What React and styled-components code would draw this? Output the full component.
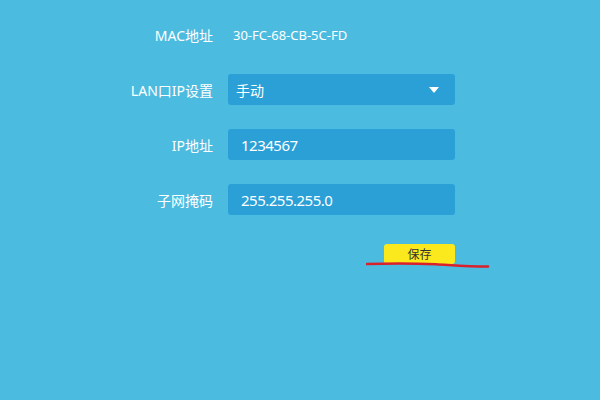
import React from "react";
import styled, { createGlobalStyle } from "styled-components";

const GlobalStyle = createGlobalStyle`
  html, body {
    margin: 0;
    padding: 0;
    background: #4bbce0;
  }

  body {
    font-family: "Noto Sans", "Noto Sans CJK SC", sans-serif;
  }
`;

const fields = [
  { label: "IP地址", value: "1234567" },
  { label: "子网掩码", value: "255.255.255.0" },
];

const App = () => {
  return (
    <Page>
      <GlobalStyle />
      <Form>
        <Label>MAC地址</Label>
        <StaticValue>30-FC-68-CB-5C-FD</StaticValue>

        <Label>LAN口IP设置</Label>
        <Select>
          <span>手动</span>
          <Caret />
        </Select>

        {fields.map((field) => (
          <React.Fragment key={field.label}>
            <Label>{field.label}</Label>
            <Input>{field.value}</Input>
          </React.Fragment>
        ))}

        <ButtonRow>
          <SaveButton>保存</SaveButton>
          <Scribble viewBox="0 0 125 7" width="125" height="7">
            <path
              d="M1 2 C 20 1.5, 50 1.5, 70 2.2 C 85 3, 100 4.5, 122 4.5"
              stroke="#d9212c"
              strokeWidth="2.6"
              fill="none"
              strokeLinecap="round"
            />
          </Scribble>
        </ButtonRow>
      </Form>
    </Page>
  );
};

const Page = styled.div`
  width: 600px;
  height: 400px;
  box-sizing: border-box;
  padding-top: 19px;
  background: #4bbce0;
  color: #ffffff;
`;

const Form = styled.div`
  display: grid;
  grid-template-columns: 213px 227px;
  grid-auto-rows: 31px;
  column-gap: 15px;
  row-gap: 24px;
`;

const Label = styled.div`
  display: flex;
  align-items: center;
  justify-content: flex-end;
  font-size: 14px;
  color: #ffffff;
`;

const StaticValue = styled.div`
  display: flex;
  align-items: center;
  padding-left: 5px;
  font-size: 13px;
  color: #ffffff;
`;

const Field = styled.div`
  display: flex;
  align-items: center;
  background: #2aa0d7;
  border-radius: 3px;
  color: #ffffff;
`;

const Select = styled(Field)`
  justify-content: space-between;
  padding: 0 16px 0 8px;
  font-size: 14px;
`;

const Caret = styled.span`
  width: 0;
  height: 0;
  border-left: 5px solid transparent;
  border-right: 5px solid transparent;
  border-top: 6px solid #ffffff;
`;

const Input = styled(Field)`
  padding-left: 13px;
  font-size: 15px;
  letter-spacing: -0.5px;
`;

const ButtonRow = styled.div`
  grid-column: 2;
  position: relative;
  display: flex;
  justify-content: flex-end;
  align-items: flex-start;
  margin-top: 5px;
`;

const SaveButton = styled.div`
  width: 71px;
  height: 20px;
  display: flex;
  align-items: center;
  justify-content: center;
  background: #fbe91e;
  border-radius: 3px;
  font-size: 12px;
  color: #333333;
`;

const Scribble = styled.svg`
  position: absolute;
  left: 138px;
  top: 18px;
`;

export default App;
